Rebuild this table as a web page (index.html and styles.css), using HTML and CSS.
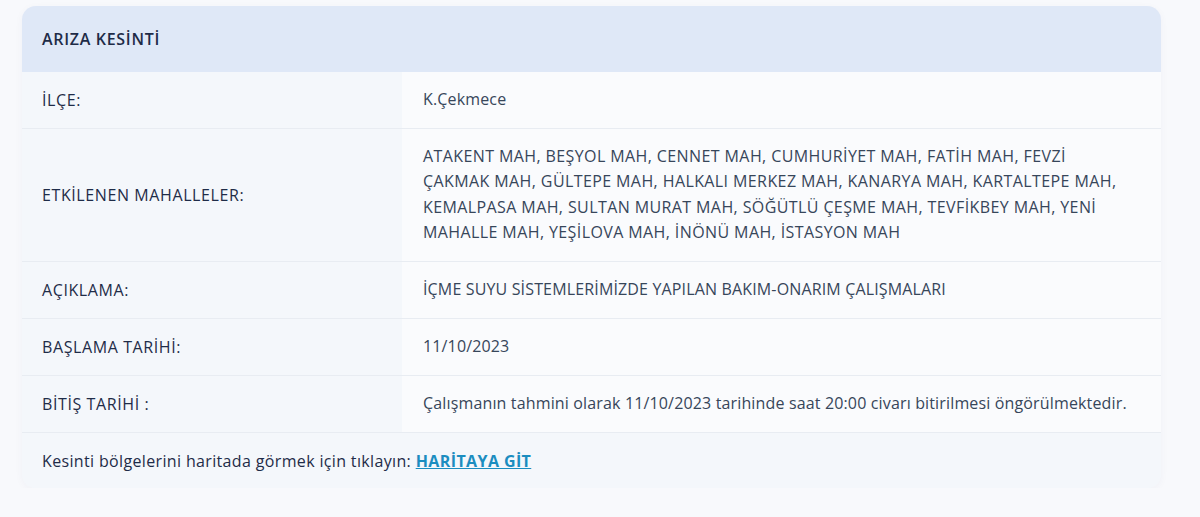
FILE: index.html
```html
<!DOCTYPE html>
<html lang="tr">
<head>
    <meta charset="UTF-8">
    <title>Arıza Kesinti</title>
    <link rel="stylesheet" href="styles.css">
</head>
<body>
    <div class="outage-card">
        <div class="card-head">ARIZA KESİNTİ</div>

        <div class="info-row">
            <div class="info-label">İLÇE:</div>
            <div class="info-value">K.Çekmece</div>
        </div>
        <div class="info-row">
            <div class="info-label">ETKİLENEN MAHALLELER:</div>
            <div class="info-value caps">ATAKENT MAH, BEŞYOL MAH, CENNET MAH, CUMHURİYET MAH, FATİH MAH, FEVZİ<br>ÇAKMAK MAH, GÜLTEPE MAH, HALKALI MERKEZ MAH, KANARYA MAH, KARTALTEPE MAH,<br>KEMALPASA MAH, SULTAN MURAT MAH, SÖĞÜTLÜ ÇEŞME MAH, TEVFİKBEY MAH, YENİ<br>MAHALLE MAH, YEŞİLOVA MAH, İNÖNÜ MAH, İSTASYON MAH</div>
        </div>
        <div class="info-row">
            <div class="info-label">AÇIKLAMA:</div>
            <div class="info-value">İÇME SUYU SİSTEMLERİMİZDE YAPILAN BAKIM-ONARIM ÇALIŞMALARI</div>
        </div>
        <div class="info-row">
            <div class="info-label">BAŞLAMA TARİHİ:</div>
            <div class="info-value">11/10/2023</div>
        </div>
        <div class="info-row">
            <div class="info-label">BİTİŞ TARİHİ :</div>
            <div class="info-value">Çalışmanın tahmini olarak 11/10/2023 tarihinde saat 20:00 civarı bitirilmesi öngörülmektedir.</div>
        </div>

        <div class="card-foot">
            Kesinti bölgelerini haritada görmek için tıklayın:&nbsp;<a href="#" class="map-link">HARİTAYA GİT</a>
        </div>
    </div>
</body>
</html>
```

FILE: styles.css
```css
body { margin: 0; padding: 6px 0 0 22px; background: #f8f9fc; font-family: "Open Sans", sans-serif; }
.outage-card { width: 1139px; border-radius: 14px; overflow: hidden; background: #f4f7fb; box-shadow: 0 2px 8px rgba(40, 60, 100, 0.04); }
.card-head { height: 66px; box-sizing: border-box; padding: 0 20px; display: flex; align-items: center; background: #dfe8f7; color: #1e2b47; font-weight: 600; font-size: 16px; letter-spacing: 0.7px; }
.info-row { display: grid; grid-template-columns: 380px 1fr; border-bottom: 1px solid #e8ecf2; }
.info-label { display: flex; align-items: center; padding: 15px 20px; color: #1f2c48; font-size: 16px; line-height: 25px; letter-spacing: 0.6px; background: #f4f7fb; }
.info-value { padding: 15px 28px 16px 21px; color: #37465a; font-size: 16px; line-height: 25px; letter-spacing: 0.15px; background: #fafbfd; }
.info-value.caps { line-height: 25.25px; letter-spacing: 0.4px; white-space: nowrap; }
.card-foot { height: 55px; box-sizing: border-box; padding: 0 20px; display: flex; align-items: center; color: #1f2c48; font-size: 16px; letter-spacing: 0.35px; background: #f4f7fb; }
.map-link { color: #1b8dc0; font-weight: bold; letter-spacing: 0.4px; text-decoration: underline; }
```
